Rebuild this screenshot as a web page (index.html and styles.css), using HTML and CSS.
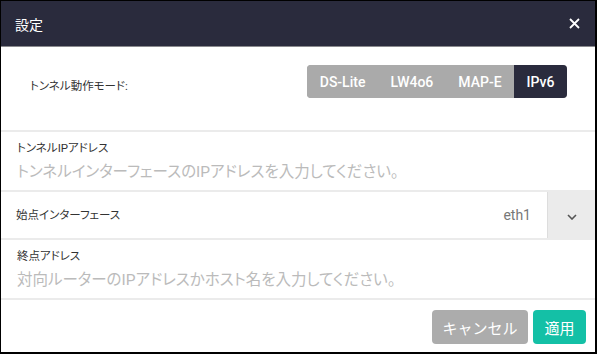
FILE: index.html
```html
<!DOCTYPE html>
<html lang="ja">
<head>
  <meta charset="UTF-8">
  <meta name="viewport" content="width=device-width, initial-scale=1">
  <title>設定</title>
  <link rel="stylesheet" href="styles.css">
</head>
<body>
  <div class="dialog">
    <div class="dialog-header">
      <span class="dialog-title">設定</span>
      <button class="close-button" aria-label="閉じる">
        <svg width="11" height="11" viewBox="0 0 11 11"><path d="M1 1L10 10M10 1L1 10" stroke="#fff" stroke-width="1.8" fill="none"/></svg>
      </button>
    </div>
    <div class="row mode-row">
      <label class="mode-label">トンネル動作モード:</label>
      <div class="segmented">
        <button class="seg">DS-Lite</button>
        <button class="seg">LW4o6</button>
        <button class="seg">MAP-E</button>
        <button class="seg active">IPv6</button>
      </div>
    </div>
    <div class="row field-row">
      <label class="field-label" for="tunnelIp">トンネルIPアドレス</label>
      <input class="field-input" type="text" id="tunnelIp" placeholder="トンネルインターフェースのIPアドレスを入力してください。">
    </div>
    <div class="row select-row">
      <label class="field-label">始点インターフェース</label>
      <span class="select-value">eth1</span>
      <div class="select-toggle">
        <svg width="10" height="6" viewBox="0 0 10 6"><path d="M1 1L5 5L9 1" stroke="#555" stroke-width="1.6" fill="none"/></svg>
      </div>
    </div>
    <div class="row field-row">
      <label class="field-label" for="endAddr">終点アドレス</label>
      <input class="field-input" type="text" id="endAddr" placeholder="対向ルーターのIPアドレスかホスト名を入力してください。">
    </div>
    <div class="dialog-footer">
      <button class="button button-cancel">キャンセル</button>
      <button class="button button-apply">適用</button>
    </div>
  </div>
</body>
</html>
```

FILE: styles.css
```css
html, body {
  margin: 0;
  padding: 0;
  background-color: #000;
}
body {
  font-family: Roboto, "Noto Sans CJK JP", sans-serif;
}
.dialog {
  box-sizing: border-box;
  width: 597px;
  height: 354px;
  border-style: solid;
  border-color: #000;
  border-width: 1px 2px 2px 1px;
  background-color: #fff;
  display: flex;
  flex-direction: column;
}
.dialog-header {
  height: 45px;
  background-color: #2a2b3d;
  border-bottom: 1px solid #8a8a8e;
  display: flex;
  align-items: center;
  padding: 0 15px 0 14px;
}
.dialog-title {
  flex-grow: 1;
  color: #fff;
  font-size: 14px;
  font-feature-settings: "palt";
}
.close-button {
  background: none;
  border: none;
  padding: 0;
  width: 11px;
  height: 11px;
  display: flex;
  cursor: pointer;
}
.row {
  border-bottom: 2px solid #ebebeb;
  box-sizing: border-box;
}
.mode-row {
  height: 85px;
  display: flex;
  align-items: flex-start;
  justify-content: space-between;
  padding: 18px 28px 0 29px;
}
.mode-label {
  margin-top: 13px;
  font-size: 11.5px;
  line-height: 16px;
  color: #333;
  font-feature-settings: "palt";
}
.segmented {
  display: flex;
  height: 33px;
  border-radius: 4px;
  overflow: hidden;
  background-color: #aaa;
}
.seg {
  border: none;
  background-color: #aaa;
  color: #fff;
  font-family: Roboto, sans-serif;
  font-size: 14px;
  font-weight: 500;
  padding: 0 12.5px;
  cursor: pointer;
}
.seg.active {
  background-color: #2a2b3d;
}
.field-row {
  height: 60px;
  display: flex;
  flex-direction: column;
  padding: 8px 16px 0 16px;
}
.field-label {
  font-size: 11.5px;
  line-height: 16px;
  color: #333;
  font-feature-settings: "palt";
}
.field-input {
  border: none;
  outline: none;
  padding: 0;
  margin-top: 5px;
  font-family: Roboto, "Noto Sans CJK JP", sans-serif;
  font-size: 15.5px;
  line-height: 22px;
  color: #333;
  font-feature-settings: "palt";
}
.field-input::placeholder {
  color: #bbb;
}
.select-row {
  height: 48px;
  display: flex;
  align-items: center;
  padding-left: 15px;
}
.select-row .field-label {
  flex-grow: 1;
}
.select-value {
  font-size: 14px;
  color: #777;
  margin-right: 16px;
}
.select-toggle {
  width: 48px;
  height: 100%;
  background-color: #ebebeb;
  border-left: 1px solid #ddd;
  display: flex;
  align-items: center;
  justify-content: center;
  padding-top: 4px;
  box-sizing: border-box;
}
.dialog-footer {
  flex-grow: 1;
  display: flex;
  justify-content: flex-end;
  align-items: flex-start;
  gap: 5px;
  padding: 10px 9px 0 0;
}
.button {
  border: none;
  border-radius: 4px;
  height: 34px;
  color: #fff;
  font-family: Roboto, "Noto Sans CJK JP", sans-serif;
  font-size: 15px;
  cursor: pointer;
}
.button-cancel {
  width: 96px;
  background-color: #acacac;
}
.button-apply {
  width: 53px;
  background-color: #14c0a6;
}
```
